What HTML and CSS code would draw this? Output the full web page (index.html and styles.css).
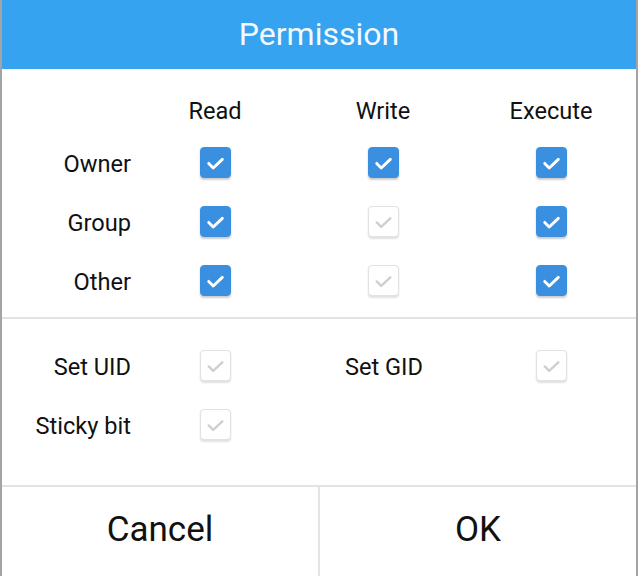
FILE: index.html
```html
<!DOCTYPE html>
<html lang="en">
<head>
    <meta charset="UTF-8">
    <title>Permission</title>
    <link rel="stylesheet" href="styles.css">
</head>
<body>
    <div class="dialog">
        <div class="title">Permission</div>

        <div class="perm-grid">
            <div></div>
            <div class="col-head">Read</div>
            <div class="col-head">Write</div>
            <div class="col-head">Execute</div>

            <div class="row-label">Owner</div>
            <div class="cell"><span class="check on"><svg viewBox="0 0 32 32"><path d="M8.5 17 L13.5 22 L23.5 12.5"/></svg></span></div>
            <div class="cell"><span class="check on"><svg viewBox="0 0 32 32"><path d="M8.5 17 L13.5 22 L23.5 12.5"/></svg></span></div>
            <div class="cell"><span class="check on"><svg viewBox="0 0 32 32"><path d="M8.5 17 L13.5 22 L23.5 12.5"/></svg></span></div>

            <div class="row-label">Group</div>
            <div class="cell"><span class="check on"><svg viewBox="0 0 32 32"><path d="M8.5 17 L13.5 22 L23.5 12.5"/></svg></span></div>
            <div class="cell"><span class="check"><svg viewBox="0 0 32 32"><path d="M8.5 17 L13.5 22 L23.5 12.5"/></svg></span></div>
            <div class="cell"><span class="check on"><svg viewBox="0 0 32 32"><path d="M8.5 17 L13.5 22 L23.5 12.5"/></svg></span></div>

            <div class="row-label">Other</div>
            <div class="cell"><span class="check on"><svg viewBox="0 0 32 32"><path d="M8.5 17 L13.5 22 L23.5 12.5"/></svg></span></div>
            <div class="cell"><span class="check"><svg viewBox="0 0 32 32"><path d="M8.5 17 L13.5 22 L23.5 12.5"/></svg></span></div>
            <div class="cell"><span class="check on"><svg viewBox="0 0 32 32"><path d="M8.5 17 L13.5 22 L23.5 12.5"/></svg></span></div>
        </div>

        <div class="special-grid">
            <div class="row-label">Set UID</div>
            <div class="cell"><span class="check"><svg viewBox="0 0 32 32"><path d="M8.5 17 L13.5 22 L23.5 12.5"/></svg></span></div>
            <div class="row-label gid">Set GID</div>
            <div class="cell"><span class="check"><svg viewBox="0 0 32 32"><path d="M8.5 17 L13.5 22 L23.5 12.5"/></svg></span></div>

            <div class="row-label">Sticky bit</div>
            <div class="cell"><span class="check"><svg viewBox="0 0 32 32"><path d="M8.5 17 L13.5 22 L23.5 12.5"/></svg></span></div>
        </div>

        <div class="buttons">
            <button>Cancel</button>
            <button>OK</button>
        </div>
    </div>
</body>
</html>
```

FILE: styles.css
```css
body {
    margin: 0;
    background-color: #a4a4a4;
    font-family: Roboto, "Liberation Sans", sans-serif;
}
.dialog {
    margin: 0 2px;
    height: 576px;
    background: #fff;
    display: flex;
    flex-direction: column;
}
.title {
    height: 69px;
    background: #35a3ef;
    color: #f3f9ff;
    font-size: 32px;
    line-height: 69px;
    text-align: center;
}
.perm-grid, .special-grid {
    display: grid;
    grid-template-columns: 129px repeat(3, 168px);
    grid-auto-rows: 59px;
    align-items: center;
    color: #111;
    font-size: 23.6px;
}
.perm-grid {
    grid-template-rows: 44px;
    padding: 20px 0 7px;
    border-bottom: 2px solid #e3e3e3;
}
.special-grid {
    padding: 17px 0 31px;
    border-bottom: 2px solid #e3e3e3;
}
.col-head {
    text-align: center;
}
.row-label {
    text-align: right;
    padding-top: 3px;
}
.row-label.gid {
    padding-right: 44px;
}
.cell {
    display: flex;
    justify-content: center;
}
.check {
    width: 31px;
    height: 31px;
    box-sizing: border-box;
    border-radius: 4px;
    background: #fff;
    border: 1.5px solid #e2e2e2;
    box-shadow: 0 1.5px 2px rgba(0, 0, 0, 0.12);
    display: flex;
}
.check svg {
    width: 100%;
    height: 100%;
    fill: none;
    stroke: #cfcfcf;
    stroke-width: 2.6;
    stroke-linecap: round;
    stroke-linejoin: round;
}
.check.on {
    background: #3b8fe0;
    border-color: #3b8fe0;
    box-shadow: 0 1.5px 2px rgba(0, 0, 0, 0.2);
}
.check.on svg {
    stroke: #fff;
    stroke-width: 3.2;
}
.buttons {
    flex: 1;
    display: flex;
}
.buttons button {
    flex: 1;
    border: none;
    background: #fff;
    font-family: inherit;
    font-size: 35px;
    color: #111;
    padding: 0 0 5px;
    cursor: pointer;
}
.buttons button + button {
    border-left: 2px solid #e3e3e3;
}
```
